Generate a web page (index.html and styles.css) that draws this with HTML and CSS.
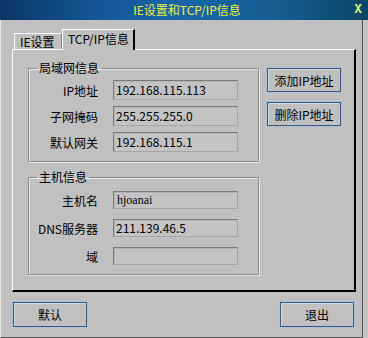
FILE: index.html
```html
<!DOCTYPE html>
<html lang="zh-CN">
<head>
    <meta charset="UTF-8">
    <title>IE设置和TCP/IP信息</title>
    <link rel="stylesheet" href="styles.css">
</head>
<body>
    <div class="titlebar">
        <span class="title">IE设置和TCP/IP信息</span>
        <span class="close">X</span>
    </div>
    <div class="window">
        <div class="tabs">
            <div class="tab">IE设置</div>
            <div class="tab active">TCP/IP信息</div>
        </div>
        <div class="panel">
            <div class="groups">
                <fieldset class="group lan">
                    <legend>局域网信息</legend>
                    <div class="row">
                        <label>IP地址</label>
                        <div class="field">192.168.115.113</div>
                    </div>
                    <div class="row">
                        <label>子网掩码</label>
                        <div class="field">255.255.255.0</div>
                    </div>
                    <div class="row">
                        <label>默认网关</label>
                        <div class="field">192.168.115.1</div>
                    </div>
                </fieldset>
                <fieldset class="group host">
                    <legend>主机信息</legend>
                    <div class="row">
                        <label>主机名</label>
                        <div class="field serif">hjoanai</div>
                    </div>
                    <div class="row">
                        <label>DNS服务器</label>
                        <div class="field">211.139.46.5</div>
                    </div>
                    <div class="row">
                        <label>域</label>
                        <div class="field"></div>
                    </div>
                </fieldset>
            </div>
            <div class="side">
                <button class="btn">添加IP地址</button>
                <button class="btn">删除IP地址</button>
            </div>
        </div>
        <div class="footer">
            <button class="btn">默认</button>
            <button class="btn">退出</button>
        </div>
    </div>
</body>
</html>
```

FILE: styles.css
```css
body {
    margin: 0;
    font-family: "Noto Sans CJK SC", sans-serif;
    font-size: 12px;
    background-color: #c4c4c4;
    color: #000;
    width: 368px;
    height: 338px;
    overflow: hidden;
}
.titlebar {
    height: 20px;
    display: flex;
    align-items: center;
    background: linear-gradient(90deg, #0b3768 0%, #135595 25%, #1a66a8 50%, #155d92 75%, #0a4668 100%);
    color: #f0f040;
}
.titlebar .title {
    flex: 1;
    text-align: center;
    padding-left: 26px;
    line-height: 20px;
}
.titlebar .close {
    width: 20px;
    font-family: "Liberation Mono", monospace;
    font-weight: bold;
    font-size: 12px;
    color: #e0ff80;
    text-align: center;
}
.window {
    width: 363px;
    height: 318px;
    box-sizing: border-box;
    background-color: #c0c0c0;
    border-left: 1px solid #e4e4e4;
    border-right: 1px solid #555;
    border-bottom: 1px solid #555;
}
.tabs {
    display: flex;
    align-items: flex-end;
    height: 20px;
    padding-top: 9px;
    padding-left: 13px;
}
.tab {
    height: 16px;
    line-height: 16px;
    padding: 0 5px;
    box-sizing: border-box;
    width: 48px;
    border-top: 1px solid #fff;
    border-left: 1px solid #fff;
    border-right: 1px solid #808080;
    white-space: nowrap;
}
.tab.active {
    height: 21px;
    width: 73px;
    line-height: 18px;
    border-right: 2px solid #000;
    background-color: #c0c0c0;
    margin-bottom: -1px;
    position: relative;
    z-index: 1;
}
.panel {
    margin-left: 11px;
    width: 344px;
    height: 243px;
    box-sizing: border-box;
    border-top: 1px solid #fff;
    border-left: 1px solid #fff;
    border-right: 2px solid #000;
    border-bottom: 2px solid #000;
    padding: 10px 0 0 15px;
    display: flex;
    gap: 8px;
}
.groups {
    width: 231px;
}
.group {
    margin: 0;
    padding: 0;
    border: 1px solid #8c8c8c;
    box-shadow: 1px 1px 0 #e8e8e8, inset 1px 1px 0 #e8e8e8;
}
.group legend {
    margin-left: 8px;
    padding: 0 2px;
    line-height: 16px;
}
.group .row {
    display: grid;
    grid-template-columns: 69px 125px;
    column-gap: 15px;
    align-items: center;
}
.group label {
    text-align: right;
}
.field {
    box-sizing: border-box;
    padding-left: 2px;
    border: 1px solid;
    border-color: #7c7c7c #a6a6a6 #a6a6a6 #7c7c7c;
    background-color: #c4c4c4;
    box-shadow: inset 1px 1px 0 #b2b2b2;
    white-space: nowrap;
}
.field.serif {
    font-family: "Liberation Serif", "Noto Sans CJK SC", serif;
    font-size: 12px;
    padding-left: 3px;
}
.lan {
    padding: 4px 0 9px;
}
.lan .row + .row {
    margin-top: 6px;
}
.lan .field {
    height: 20px;
    line-height: 18px;
}
.host {
    margin-top: 7px;
    padding: 6px 0 9px;
}
.host .row + .row {
    margin-top: 10px;
}
.host .field {
    height: 18px;
    line-height: 16px;
}
.side {
    display: flex;
    flex-direction: column;
    gap: 10px;
    padding-top: 8px;
}
.btn {
    width: 74px;
    height: 24px;
    padding: 0;
    font-family: inherit;
    font-size: 12px;
    color: #000;
    background-color: #c0c0c0;
    border: 1px solid #3d5b7a;
    box-shadow: 0 0 0 1px #a9c0d5, inset 1px 1px 0 #d2d8de;
    white-space: nowrap;
}
.footer {
    display: flex;
    justify-content: space-between;
    padding: 10px 8px 0 12px;
}
.footer .btn {
    height: 25px;
}
```
